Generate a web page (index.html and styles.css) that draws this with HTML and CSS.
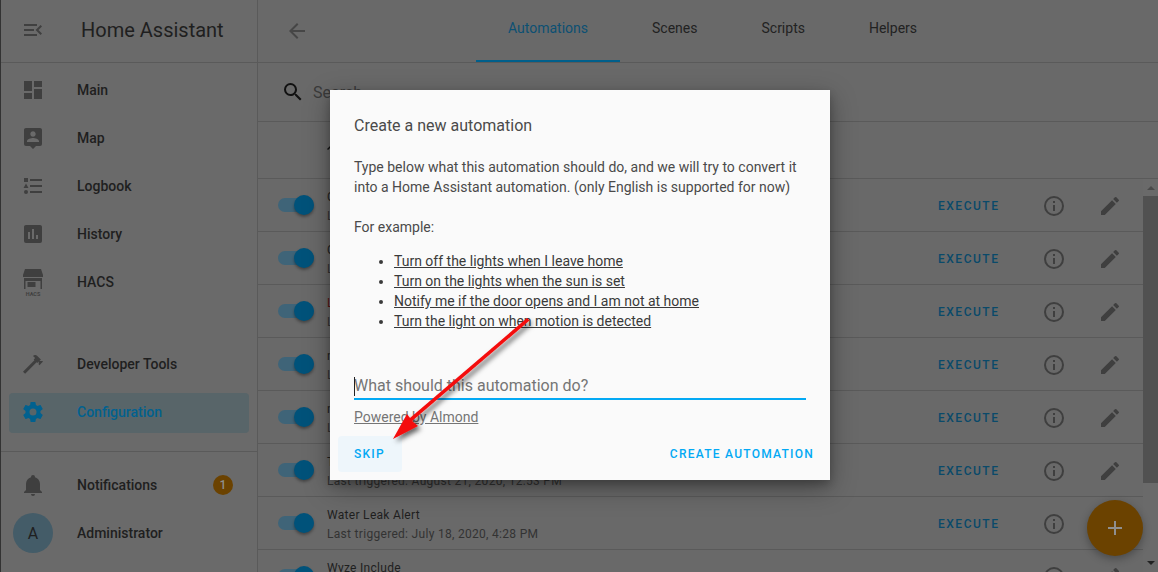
FILE: index.html
```html
<!DOCTYPE html>
<html lang="en">
<head>
<meta charset="utf-8">
<title>Automations</title>
<link rel="stylesheet" href="styles.css">
</head>
<body>
<div class="app">
  <aside class="sidebar">
    <div class="brand">
      <svg class="ico menu-ico" viewBox="0 0 24 24"><path d="M21,15.61L19.59,17L14.58,12L19.59,7L21,8.39L17.44,12L21,15.61M3,6H16V8H3V6M3,13V11H13V13H3M3,18V16H16V18H3Z"/></svg>
      <span class="brand-name">Home Assistant</span>
    </div>
    <nav class="nav">
      <a class="nav-item"><svg class="ico" viewBox="0 0 24 24"><path d="M3 13h8V3H3v10zm0 8h8v-6H3v6zm10 0h8V11h-8v10zm0-18v6h8V3h-8z"/></svg><span>Main</span></a>
      <a class="nav-item"><svg class="ico" viewBox="0 0 24 24"><path fill-rule="evenodd" d="M18,16H6V15.1C6,13.1 10,12 12,12C14,12 18,13.1 18,15.1V16M12,5.3C13.5,5.3 14.7,6.5 14.7,8C14.7,9.5 13.5,10.7 12,10.7C10.5,10.7 9.3,9.5 9.3,8C9.3,6.5 10.5,5.3 12,5.3M19,2H5C3.89,2 3,2.89 3,4V18A2,2 0 0,0 5,20H9L12,23L15,20H19A2,2 0 0,0 21,18V4C21,2.89 20.1,2 19,2Z"/></svg><span>Map</span></a>
      <a class="nav-item"><svg class="ico" viewBox="0 0 24 24"><path d="M5,9.5L7.5,14H2.5L5,9.5M3,4H7V8H3V4M5,20A2,2 0 0,0 7,18A2,2 0 0,0 5,16A2,2 0 0,0 3,18A2,2 0 0,0 5,20M9,5V7H21V5H9M9,19H21V17H9V19M9,13H21V11H9V13Z"/></svg><span>Logbook</span></a>
      <a class="nav-item"><svg class="ico" viewBox="0 0 24 24"><path fill-rule="evenodd" d="M17,17H15V13H17V17M13,17H11V7H13V17M9,17H7V10H9V17M19,3H5C3.89,3 3,3.89 3,5V19A2,2 0 0,0 5,21H19A2,2 0 0,0 21,19V5C21,3.89 20.1,3 19,3Z"/></svg><span>History</span></a>
      <a class="nav-item"><svg class="ico hacs-ico" viewBox="0 0 24 28"><path d="M4 1h16l2 6v2H2V7zM3 10h18v11h-1.500v-8h-15v8H3zM6.500 14h8v5h-8z"/><text x="12" y="27.500" class="hacs-label">HACS</text></svg><span>HACS</span></a>
    </nav>
    <nav class="nav-tools">
      <a class="nav-item"><svg class="ico" viewBox="0 0 24 24"><path d="M2 19.63L13.43 8.2L12.72 7.5L14.14 6.07L12 3.89C13.2 2.7 15.09 2.7 16.27 3.89L19.87 7.5L18.45 8.91H21.29L22 9.62L18.45 13.21L17.74 12.5V9.62L16.27 11.04L15.56 10.33L4.13 21.76L2 19.63Z"/></svg><span>Developer Tools</span></a>
      <a class="nav-item nav-active"><svg class="ico" viewBox="0 0 24 24"><path d="M12 15.500A3.500 3.500 0 1 1 12 8.500a3.500 3.500 0 0 1 0 7zm7.430-2.530c.04-.32.07-.64.07-.97s-.03-.66-.07-1l2.110-1.630c.19-.15.24-.42.12-.64l-2-3.460c-.12-.22-.39-.31-.61-.22l-2.490 1c-.52-.39-1.060-.73-1.690-.98l-.37-2.650A.506.506 0 0 0 14 2h-4c-.25 0-.46.18-.5.420l-.37 2.650c-.63.25-1.170.59-1.690.98l-2.490-1c-.22-.09-.49 0-.61.220l-2 3.460c-.13.220-.07.490.12.640L4.570 11c-.04.340-.07.670-.07 1s.03.650.07.970l-2.110 1.660c-.19.150-.25.420-.12.640l2 3.460c.12.220.39.300.61.220l2.490-1.010c.52.400 1.060.740 1.690.990l.37 2.650c.04.240.25.420.5.420h4c.25 0 .46-.18.5-.42l.37-2.650c.63-.26 1.170-.59 1.690-.99l2.490 1.010c.22.080.49 0 .61-.22l2-3.460c.12-.22.07-.49-.12-.64l-2.110-1.660z"/></svg><span>Configuration</span></a>
    </nav>
    <div class="sidebar-foot">
      <a class="nav-item"><svg class="ico" viewBox="0 0 24 24"><path d="M21,19V20H3V19L5,17V11C5,7.9 7.03,5.17 10,4.29C10,4.19 10,4.1 10,4A2,2 0 0,1 12,2A2,2 0 0,1 14,4C14,4.1 14,4.19 14,4.29C16.97,5.17 19,7.9 19,11V17L21,19M14,21A2,2 0 0,1 12,23A2,2 0 0,1 10,21"/></svg><span>Notifications</span><b class="badge">1</b></a>
      <a class="nav-item user-item"><span class="avatar">A</span><span>Administrator</span></a>
    </div>
  </aside>

  <main class="main">
    <header class="topbar">
      <svg class="ico back-ico" viewBox="0 0 24 24"><path d="M20 11H7.830l5.590-5.590L12 4l-8 8 8 8 1.410-1.410L7.830 13H20z"/></svg>
      <div class="tabs">
        <a class="tab tab-active">Automations</a>
        <a class="tab">Scenes</a>
        <a class="tab">Scripts</a>
        <a class="tab">Helpers</a>
      </div>
    </header>
    <div class="search-bar">
      <svg class="ico search-ico" viewBox="0 0 24 24"><path d="M9.5,3A6.5,6.5 0 0,1 16,9.5C16,11.11 15.41,12.59 14.44,13.73L14.71,14H15.5L20.5,19L19,20.5L14,15.5V14.71L13.73,14.44C12.59,15.41 11.11,16 9.5,16A6.5,6.5 0 0,1 3,9.5A6.5,6.5 0 0,1 9.5,3M9.5,5C7,5 5,7 5,9.5C5,12 7,14 9.5,14C12,14 14,12 14,9.5C14,7 12,5 9.5,5Z"/></svg>
      <span class="search-text">Search</span>
    </div>
    <div class="table-head"><svg class="sort-arrow" viewBox="0 0 24 24"><path d="M4 12l1.410 1.410L11 7.830V20h2V7.830l5.580 5.590L20 12l-8-8-8 8z"/></svg></div>
    <div class="rows">
      <div class="row"><span class="toggle"></span><div class="row-text"><div class="row-title">Close Garage</div><div class="row-sub">Last triggered: August 21, 2020</div></div><a class="exec">EXECUTE</a><svg class="ico info" viewBox="0 0 24 24"><path d="M11 7h2v2h-2zm0 4h2v6h-2zm1-9a10 10 0 1 0 0 20 10 10 0 0 0 0-20zm0 18a8 8 0 1 1 0-16 8 8 0 0 1 0 16z"/></svg><svg class="ico edit" viewBox="0 0 24 24"><path d="M3 17.250V21h3.750L17.810 9.940l-3.750-3.750L3 17.250zM20.710 7.040a1 1 0 0 0 0-1.410l-2.340-2.340a1 1 0 0 0-1.410 0l-1.830 1.830 3.750 3.750 1.830-1.830z"/></svg></div>
      <div class="row"><span class="toggle"></span><div class="row-text"><div class="row-title">Close Door</div><div class="row-sub">Last triggered: August 21, 2020</div></div><a class="exec">EXECUTE</a><svg class="ico info" viewBox="0 0 24 24"><path d="M11 7h2v2h-2zm0 4h2v6h-2zm1-9a10 10 0 1 0 0 20 10 10 0 0 0 0-20zm0 18a8 8 0 1 1 0-16 8 8 0 0 1 0 16z"/></svg><svg class="ico edit" viewBox="0 0 24 24"><path d="M3 17.250V21h3.750L17.810 9.940l-3.750-3.750L3 17.250zM20.710 7.040a1 1 0 0 0 0-1.410l-2.340-2.340a1 1 0 0 0-1.410 0l-1.830 1.830 3.750 3.750 1.830-1.830z"/></svg></div>
      <div class="row"><span class="toggle"></span><div class="row-text"><div class="row-title row-title-red">Leak Alarm</div><div class="row-sub">Last triggered: August 21, 2020</div></div><a class="exec">EXECUTE</a><svg class="ico info" viewBox="0 0 24 24"><path d="M11 7h2v2h-2zm0 4h2v6h-2zm1-9a10 10 0 1 0 0 20 10 10 0 0 0 0-20zm0 18a8 8 0 1 1 0-16 8 8 0 0 1 0 16z"/></svg><svg class="ico edit" viewBox="0 0 24 24"><path d="M3 17.250V21h3.750L17.810 9.940l-3.750-3.750L3 17.250zM20.710 7.040a1 1 0 0 0 0-1.410l-2.340-2.340a1 1 0 0 0-1.410 0l-1.830 1.830 3.750 3.750 1.830-1.830z"/></svg></div>
      <div class="row"><span class="toggle"></span><div class="row-text"><div class="row-title">night mode</div><div class="row-sub">Last triggered: August 21, 2020</div></div><a class="exec">EXECUTE</a><svg class="ico info" viewBox="0 0 24 24"><path d="M11 7h2v2h-2zm0 4h2v6h-2zm1-9a10 10 0 1 0 0 20 10 10 0 0 0 0-20zm0 18a8 8 0 1 1 0-16 8 8 0 0 1 0 16z"/></svg><svg class="ico edit" viewBox="0 0 24 24"><path d="M3 17.250V21h3.750L17.810 9.940l-3.750-3.750L3 17.250zM20.710 7.040a1 1 0 0 0 0-1.410l-2.340-2.340a1 1 0 0 0-1.410 0l-1.830 1.830 3.750 3.750 1.830-1.830z"/></svg></div>
      <div class="row"><span class="toggle"></span><div class="row-text"><div class="row-title">night away</div><div class="row-sub">Last triggered: August 21, 2020</div></div><a class="exec">EXECUTE</a><svg class="ico info" viewBox="0 0 24 24"><path d="M11 7h2v2h-2zm0 4h2v6h-2zm1-9a10 10 0 1 0 0 20 10 10 0 0 0 0-20zm0 18a8 8 0 1 1 0-16 8 8 0 0 1 0 16z"/></svg><svg class="ico edit" viewBox="0 0 24 24"><path d="M3 17.250V21h3.750L17.810 9.940l-3.750-3.750L3 17.250zM20.710 7.040a1 1 0 0 0 0-1.410l-2.340-2.340a1 1 0 0 0-1.410 0l-1.830 1.830 3.750 3.750 1.830-1.830z"/></svg></div>
      <div class="row"><span class="toggle"></span><div class="row-text"><div class="row-title">Turn off</div><div class="row-sub">Last triggered: August 21, 2020, 12:53 PM</div></div><a class="exec">EXECUTE</a><svg class="ico info" viewBox="0 0 24 24"><path d="M11 7h2v2h-2zm0 4h2v6h-2zm1-9a10 10 0 1 0 0 20 10 10 0 0 0 0-20zm0 18a8 8 0 1 1 0-16 8 8 0 0 1 0 16z"/></svg><svg class="ico edit" viewBox="0 0 24 24"><path d="M3 17.250V21h3.750L17.810 9.940l-3.750-3.750L3 17.250zM20.710 7.040a1 1 0 0 0 0-1.410l-2.340-2.340a1 1 0 0 0-1.410 0l-1.830 1.830 3.750 3.750 1.830-1.830z"/></svg></div>
      <div class="row"><span class="toggle"></span><div class="row-text"><div class="row-title">Water Leak Alert</div><div class="row-sub">Last triggered: July 18, 2020, 4:28 PM</div></div><a class="exec">EXECUTE</a><svg class="ico info" viewBox="0 0 24 24"><path d="M11 7h2v2h-2zm0 4h2v6h-2zm1-9a10 10 0 1 0 0 20 10 10 0 0 0 0-20zm0 18a8 8 0 1 1 0-16 8 8 0 0 1 0 16z"/></svg><svg class="ico edit" viewBox="0 0 24 24"><path d="M3 17.250V21h3.750L17.810 9.940l-3.750-3.750L3 17.250zM20.710 7.040a1 1 0 0 0 0-1.410l-2.340-2.340a1 1 0 0 0-1.410 0l-1.830 1.830 3.750 3.750 1.830-1.830z"/></svg></div>
      <div class="row"><span class="toggle"></span><div class="row-text"><div class="row-title">Wyze Include</div><div class="row-sub">Last triggered: July 18, 2020</div></div><a class="exec">EXECUTE</a><svg class="ico info" viewBox="0 0 24 24"><path d="M11 7h2v2h-2zm0 4h2v6h-2zm1-9a10 10 0 1 0 0 20 10 10 0 0 0 0-20zm0 18a8 8 0 1 1 0-16 8 8 0 0 1 0 16z"/></svg><svg class="ico edit" viewBox="0 0 24 24"><path d="M3 17.250V21h3.750L17.810 9.940l-3.750-3.750L3 17.250zM20.710 7.040a1 1 0 0 0 0-1.410l-2.340-2.340a1 1 0 0 0-1.410 0l-1.830 1.830 3.750 3.750 1.830-1.830z"/></svg></div>
    </div>
    <div class="scrollbar"><i class="sb-up"></i><i class="sb-thumb"></i><i class="sb-down"></i></div>
    <div class="fab"><svg viewBox="0 0 24 24"><path d="M19 13h-6v6h-2v-6H5v-2h6V5h2v6h6z"/></svg></div>
  </main>

  <section class="dialog">
    <h2 class="dialog-title">Create a new automation</h2>
    <p class="dialog-p">Type below what this automation should do, and we will try to convert it into a Home Assistant automation. (only English is supported for now)</p>
    <p class="dialog-p for-example">For example:</p>
    <ul class="examples">
      <li><a>Turn off the lights when I leave home</a></li>
      <li><a>Turn on the lights when the sun is set</a></li>
      <li><a>Notify me if the door opens and I am not at home</a></li>
      <li><a>Turn the light on when motion is detected</a></li>
    </ul>
    <div class="field"><span class="caret"></span><span class="placeholder">What should this automation do?</span></div>
    <a class="powered">Powered by Almond</a>
    <div class="actions">
      <a class="btn btn-skip">SKIP</a>
      <a class="btn">CREATE AUTOMATION</a>
    </div>
  </section>

  <svg class="arrow" viewBox="0 0 1158 572">
    <defs><filter id="sh" x="-30%" y="-30%" width="160%" height="160%"><feDropShadow dx="3" dy="3" stdDeviation="2.500" flood-color="#000" flood-opacity=".6"/></filter></defs>
    <path filter="url(#sh)" fill="#f40a0a" d="M527 318 L529.500 320.500 L412 421 L418 426 L393 439 L407 414 L410 418 Z"/>
  </svg>
</div>
</body>
</html>
```
FILE: styles.css
```css
* { box-sizing: border-box; }
html, body { margin: 0; height: 100%; overflow: hidden; }
body { font-family: Roboto, "Liberation Sans", sans-serif; background: #686868; color: #1f1f1f; }
a { display: inline-block; }

.app { position: relative; width: 1158px; height: 572px; display: flex; overflow: hidden; border-left: 1px solid #333; }
.ico { width: 24px; height: 24px; fill: #3f3f3f; flex: none; }

.sidebar { width: 257px; height: 572px; flex: none; border-right: 1px solid #5a5a5a; background: #6a6a6a; display: flex; flex-direction: column; }
.brand { height: 63px; flex: none; border-bottom: 1px solid #5a5a5a; display: flex; align-items: center; padding-left: 20px; padding-bottom: 2px; }
.menu-ico { fill: #404040; }
.brand-name { margin-left: 36px; font-size: 20px; color: #1f1f1f; }
.nav { padding-top: 3px; height: 277px; display: flex; flex-direction: column; flex: none; }
.nav-item { height: 48px; flex: none; display: flex; align-items: center; padding-left: 12px; margin: 0 8px; font-size: 14px; font-weight: 500; color: #1f1f1f; border-radius: 4px; position: relative; }
.nav-item > span:not(.avatar) { margin-left: 32px; }
.nav-tools { display: flex; flex-direction: column; height: 112px; flex: none; border-bottom: 1px solid #5a5a5a; }
.nav-active { background: #586569; color: #01618f; height: 40px; margin-top: 5px; padding-bottom: 2px; }
.nav-active .ico { fill: #01618f; }
.sidebar-foot { display: flex; flex-direction: column; padding-top: 9px; }
.badge { position: absolute; left: 204px; top: 14px; width: 20px; height: 20px; border-radius: 50%; background: #6b4200; color: #8f8f8f; font-size: 12px; font-weight: 500; display: flex; align-items: center; justify-content: center; }
.avatar { width: 40px; height: 40px; border-radius: 50%; background: #445c68; color: #1f1f1f; display: flex; align-items: center; justify-content: center; font-size: 16px; font-weight: 400; margin-left: -8px; margin-right: 24px; flex: none; }
.user-item > span:last-child { margin-left: 0; }
.hacs-ico { height: 28px; }
.hacs-label { font-size: 5.500px; font-weight: 700; text-anchor: middle; fill: #3f3f3f; }

.main { position: relative; flex: 1; min-width: 0; height: 572px; background: #696969; }
.topbar { height: 63px; border-bottom: 1px solid #5a5a5a; display: flex; align-items: center; }
.back-ico { margin-left: 27px; fill: #464646; }
.tabs { display: flex; margin-left: 167px; height: 62px; }
.tab { padding: 20px 32px 0; height: 62px; text-align: center; font-size: 14px; color: #222; }
.tab-active { color: #0c5073; border-bottom: 2px solid #005f8b; }
.search-bar { height: 59px; border-bottom: 1px solid #5a5a5a; display: flex; align-items: center; padding-left: 23px; }
.search-ico { fill: #111; }
.search-text { margin-left: 8px; color: #3a3a3a; font-size: 16px; }
.table-head { height: 57px; border-bottom: 1px solid #5a5a5a; padding-left: 66px; padding-top: 18px; }
.sort-arrow { display: block; width: 18px; height: 18px; fill: #111; }
.rows { display: flex; flex-direction: column; }
.row { height: 53px; flex: none; border-bottom: 1px solid #5a5a5a; display: flex; align-items: center; padding: 1px 0 0 20px; margin-right: 15px; }
.toggle { width: 36px; height: 14px; border-radius: 7px; background: #3f6478; position: relative; flex: none; margin-top: -2px; }
.toggle::after { content: ""; position: absolute; right: 0; top: -3px; width: 20px; height: 20px; border-radius: 50%; background: #00527a; box-shadow: 0 2px 3px rgba(0,0,0,.35); }
.row-text { margin-left: 13px; width: 594px; flex: none; font-size: 12px; line-height: 16px; letter-spacing: .3px; padding-top: 2px; }
.row-title { color: #1f1f1f; white-space: nowrap; }
.row-title-red { color: #5a1212; }
.row-sub { color: #333; white-space: nowrap; margin-top: 3px; }
.exec { width: 60px; font-size: 12px; font-weight: 500; letter-spacing: 1.5px; color: #0a4a6a; margin-left: 17px; }
.info { margin-left: 44px; }
.edit { margin-left: 32px; }
.scrollbar { position: absolute; right: 0; top: 179px; bottom: 0; width: 15px; background: #6a6a6a; }
.sb-up, .sb-down { position: absolute; left: 4px; width: 0; height: 0; border: 4px solid transparent; }
.sb-up { top: 3px; border-bottom-color: #4a4a4a; }
.sb-down { bottom: 3px; border-top-color: #222; }
.sb-thumb { position: absolute; left: 0; right: 0; top: 17px; height: 287px; background: #515151; }
.fab { position: absolute; left: 829px; top: 500px; width: 56px; height: 56px; border-radius: 50%; background: #6b4200; display: flex; align-items: center; justify-content: center; box-shadow: 0 3px 8px rgba(0,0,0,.3); }
.fab svg { width: 24px; height: 24px; fill: #8f8f8f; }

.dialog { position: absolute; left: 329px; top: 90px; width: 500px; height: 390px; background: #fafafa; box-shadow: 0 8px 24px rgba(0,0,0,.35), 0 4px 8px rgba(0,0,0,.2); padding: 24px 24px 0; color: #4a4a4a; font-size: 14px; display: flex; flex-direction: column; }
.dialog-title { margin: 0; font-size: 16px; font-weight: 400; line-height: 24px; color: #4a4a4a; }
.dialog-p { margin: 19px 0 0; line-height: 20px; }
.for-example { margin-top: 20px; }
.examples { margin: 14px 0 0; padding-left: 40px; line-height: 20px; color: #3a3a3a; }
.examples a { text-decoration: underline; }
.field { margin-top: 36px; width: 452px; height: 33px; padding-top: 5px; border-bottom: 2px solid #03a9f4; display: flex; align-items: center; position: relative; }
.caret { width: 1px; height: 19px; background: #222; position: absolute; left: 0; top: 10px; }
.placeholder { font-size: 16px; color: #757575; }
.powered { margin-top: 7px; color: #757575; text-decoration: underline; align-self: flex-start; line-height: 20px; }
.actions { margin: 9px -24px 0 -16px; display: flex; justify-content: space-between; align-items: center; height: 36px; }
.btn { height: 36px; line-height: 36px; padding: 0 16px; font-size: 12px; font-weight: 500; letter-spacing: 1.25px; color: #03a9f4; border-radius: 4px; }
.btn-skip { background: #eef6fb; width: 64px; }

.arrow { position: absolute; left: -1px; top: 0; width: 1158px; height: 572px; pointer-events: none; }
```
